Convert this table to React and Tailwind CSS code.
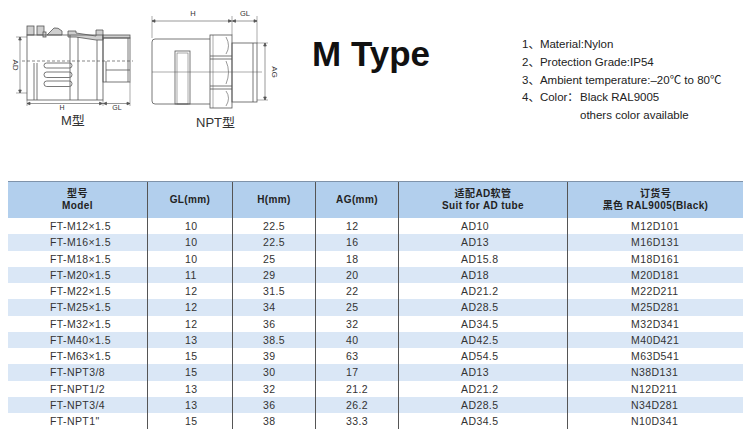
const rows = [
  ['FT-M12×1.5', '10', '22.5', '12', 'AD10', 'M12D101'],
  ['FT-M16×1.5', '10', '22.5', '16', 'AD13', 'M16D131'],
  ['FT-M18×1.5', '10', '25', '18', 'AD15.8', 'M18D161'],
  ['FT-M20×1.5', '11', '29', '20', 'AD18', 'M20D181'],
  ['FT-M22×1.5', '12', '31.5', '22', 'AD21.2', 'M22D211'],
  ['FT-M25×1.5', '12', '34', '25', 'AD28.5', 'M25D281'],
  ['FT-M32×1.5', '12', '36', '32', 'AD34.5', 'M32D341'],
  ['FT-M40×1.5', '13', '38.5', '40', 'AD42.5', 'M40D421'],
  ['FT-M63×1.5', '15', '39', '63', 'AD54.5', 'M63D541'],
  ['FT-NPT3/8', '15', '30', '17', 'AD13', 'N38D131'],
  ['FT-NPT1/2', '13', '32', '21.2', 'AD21.2', 'N12D211'],
  ['FT-NPT3/4', '13', '36', '26.2', 'AD28.5', 'N34D281'],
  ['FT-NPT1"', '15', '38', '33.3', 'AD34.5', 'N10D341'],
]

// left padding per column so values line up like the original sheet
const pads = ['pl-[42px]', 'pl-[37px]', 'pl-[30px]', 'pl-[30px]', 'pl-[62px]', 'pl-[63px]']

const ink = '#555'

function ArrowH({ x1, x2, y }) {
  return (
    <g>
      <line x1={x1} y1={y} x2={x2} y2={y} stroke={ink} strokeWidth="0.6" />
      <path d={`M${x1} ${y} l3 -1.3 v2.6 z`} fill={ink} />
      <path d={`M${x2} ${y} l-3 -1.3 v2.6 z`} fill={ink} />
    </g>
  )
}

function ArrowV({ x, y1, y2 }) {
  return (
    <g>
      <line x1={x} y1={y1} x2={x} y2={y2} stroke={ink} strokeWidth="0.6" />
      <path d={`M${x} ${y1} l-1.3 3 h2.6 z`} fill={ink} />
      <path d={`M${x} ${y2} l-1.3 -3 h2.6 z`} fill={ink} />
    </g>
  )
}

function MDrawing() {
  return (
    <svg width="145" height="112" viewBox="0 0 145 112" fill="none" stroke={ink} strokeWidth="0.8">
      {/* cap section */}
      <rect x="27" y="26" width="7" height="9" fill="#cfcfcf" />
      <rect x="37" y="26" width="7" height="9" fill="#cfcfcf" />
      <rect x="43" y="32" width="3" height="5" fill="#cfcfcf" />
      <path d="M47 35 L54 28 Q58 27 62 31 L62 35 Z" fill="#cfcfcf" />
      <path d="M68 31 H76 V33 L96 36 V30 H103 V40 H96 L76 37 H68 Z" fill="#cfcfcf" />
      <rect x="103" y="35" width="27" height="3" fill="#cfcfcf" />
      {/* body */}
      <rect x="27" y="35" width="76" height="65" />
      <line x1="34" y1="63" x2="34" y2="100" />
      <line x1="37" y1="63" x2="37" y2="100" />
      <line x1="70" y1="35" x2="70" y2="100" />
      <line x1="78" y1="37" x2="78" y2="100" />
      <line x1="97" y1="40" x2="97" y2="100" />
      <rect x="103" y="38" width="27" height="44" />
      <line x1="128" y1="38" x2="128" y2="82" />
      <line x1="106" y1="70" x2="130" y2="70" />
      <line x1="106" y1="61" x2="106" y2="82" />
      <line x1="22" y1="61" x2="133" y2="61" strokeDasharray="3 2" strokeWidth="0.7" />
      <rect x="44" y="63" width="28" height="5" rx="2.5" />
      <rect x="44" y="72" width="28" height="5.5" rx="2.7" />
      <rect x="44" y="81" width="28" height="5.5" rx="2.7" />
      {/* dimensions */}
      <line x1="16" y1="37" x2="27" y2="37" strokeWidth="0.5" />
      <line x1="16" y1="93" x2="27" y2="93" strokeWidth="0.5" />
      <ArrowV x={20} y1={37} y2={93} />
      <line x1="27" y1="100" x2="27" y2="106" strokeWidth="0.5" />
      <line x1="103" y1="100" x2="103" y2="106" strokeWidth="0.5" />
      <line x1="130" y1="82" x2="130" y2="106" strokeWidth="0.5" />
      <ArrowH x1={27} x2={102.5} y={103.5} />
      <ArrowH x1={103.5} x2={130} y={103.5} />
      <text x="12.5" y="65" fontSize="8" fill="#333" stroke="none" textAnchor="middle" transform="rotate(90 12.5 65)" fontFamily="Liberation Sans, Arial, sans-serif">AD</text>
      <text x="62" y="110" fontSize="7" fill="#333" stroke="none" textAnchor="middle" fontFamily="Liberation Sans, Arial, sans-serif">H</text>
      <text x="117" y="110" fontSize="7" fill="#333" stroke="none" textAnchor="middle" fontFamily="Liberation Sans, Arial, sans-serif">GL</text>
    </svg>
  )
}

function NptDrawing() {
  return (
    <svg width="135" height="112" viewBox="145 0 135 112" fill="none" stroke={ink} strokeWidth="0.8">
      {/* H and GL */}
      <line x1="152" y1="16" x2="152" y2="38" strokeWidth="0.5" />
      <line x1="232" y1="16" x2="232" y2="35" strokeWidth="0.5" />
      <line x1="257" y1="16" x2="257" y2="43" strokeWidth="0.5" />
      <ArrowH x1={152} x2={231.5} y={21} />
      <ArrowH x1={232.5} x2={257} y={21} />
      <text x="193" y="16" fontSize="7.5" fill="#333" stroke="none" textAnchor="middle" fontFamily="Liberation Sans, Arial, sans-serif">H</text>
      <text x="245" y="16" fontSize="7.5" fill="#333" stroke="none" textAnchor="middle" fontFamily="Liberation Sans, Arial, sans-serif">GL</text>
      {/* body */}
      <path d="M210 39 H155 Q152 39 152 42 V101 Q152 104 155 104 H210" />
      <rect x="175" y="51" width="15" height="53" />
      <rect x="177" y="53" width="11" height="51" strokeWidth="0.5" />
      {/* nut */}
      <rect x="210" y="35" width="22" height="73" />
      <line x1="210" y1="56" x2="232" y2="56" />
      <line x1="210" y1="59" x2="232" y2="59" />
      <line x1="210" y1="86" x2="232" y2="86" />
      <line x1="210" y1="89" x2="232" y2="89" />
      <path d="M226 37 Q231 46 226 54" strokeWidth="0.6" />
      <path d="M226 61 Q231 72 226 84" strokeWidth="0.6" />
      <path d="M226 91 Q231 98 226 106" strokeWidth="0.6" />
      <line x1="213" y1="35" x2="213" y2="108" strokeWidth="0.5" />
      {/* thread */}
      <rect x="232" y="43" width="25" height="59" />
      <line x1="253" y1="43" x2="253" y2="102" />
      <line x1="152" y1="72" x2="262" y2="72" strokeWidth="0.5" />
      {/* AG */}
      <line x1="257" y1="43" x2="268" y2="43" strokeWidth="0.5" />
      <line x1="257" y1="100" x2="268" y2="100" strokeWidth="0.5" />
      <ArrowV x={265} y1={43} y2={100} />
      <text x="272" y="72" fontSize="8" fill="#333" stroke="none" textAnchor="middle" transform="rotate(90 272 72)" fontFamily="Liberation Sans, Arial, sans-serif">AG</text>
    </svg>
  )
}

export default function App() {
  return (
    <div className="h-[430px] w-[750px] overflow-hidden bg-white font-['Liberation_Sans','Noto_Sans_CJK_SC',Arial,sans-serif] text-[#222]">
      <div className="flex h-[181px] items-start">
        <div className="flex w-[145px] flex-col">
          <MDrawing />
          <div className="mt-[2px] pl-[61px] text-[13px] leading-[14px] text-[#333]">M型</div>
        </div>
        <div className="flex w-[135px] flex-col">
          <NptDrawing />
          <div className="mt-[4px] pl-[51px] text-[13px] leading-[14px] text-[#333]">NPT型</div>
        </div>
        <div className="ml-[32px] mt-[36px] text-[35px] font-bold leading-[35px] text-[#111]">M Type</div>
        <ul className="ml-[92px] mt-[36px] text-[11.5px] leading-[17.8px] text-[#222]">
          <li>1、Material:Nylon</li>
          <li>2、Protection Grade:IP54</li>
          <li>3、Ambient temperature:–20℃ to 80℃</li>
          <li className="flex">
            <span className="w-[58px]">4、Color：</span>
            <span>Black RAL9005</span>
          </li>
          <li className="pl-[58px]">others color available</li>
        </ul>
      </div>

      <div className="ml-[8px] w-[735px]">
        <div className="grid h-[37px] grid-cols-[139px_85px_83px_83px_169px_176px] border-t border-[#7f93aa] bg-[#b2cfed] text-[10px] font-bold leading-[12px] tracking-[0.4px] text-[#222]">
          <div className="flex flex-col items-center justify-center">
            <span>型号</span>
            <span>Model</span>
          </div>
          <div className="flex items-center justify-center border-l border-[#555]">GL(mm)</div>
          <div className="flex items-center justify-center border-l border-[#555]">H(mm)</div>
          <div className="flex items-center justify-center border-l border-[#555]">AG(mm)</div>
          <div className="flex flex-col items-center justify-center border-l border-[#555]">
            <span>适配AD软管</span>
            <span>Suit for AD tube</span>
          </div>
          <div className="flex flex-col items-center justify-center border-l border-[#555]">
            <span>订货号</span>
            <span>黑色 RAL9005(Black)</span>
          </div>
        </div>
        {rows.map((r, i) => (
          <div
            key={r[0]}
            className={`grid h-[16.25px] grid-cols-[139px_85px_83px_83px_169px_176px] text-[10.5px] leading-[16px] tracking-[0.4px] text-[#333] ${
              i % 2 === 1 ? 'bg-[#dae7f6]' : 'bg-white'
            }`}
          >
            {r.map((c, j) => (
              <div key={j} className={`${pads[j]} ${j > 0 ? 'border-l border-[#555]' : ''}`}>
                {c}
              </div>
            ))}
          </div>
        ))}
      </div>
    </div>
  )
}
